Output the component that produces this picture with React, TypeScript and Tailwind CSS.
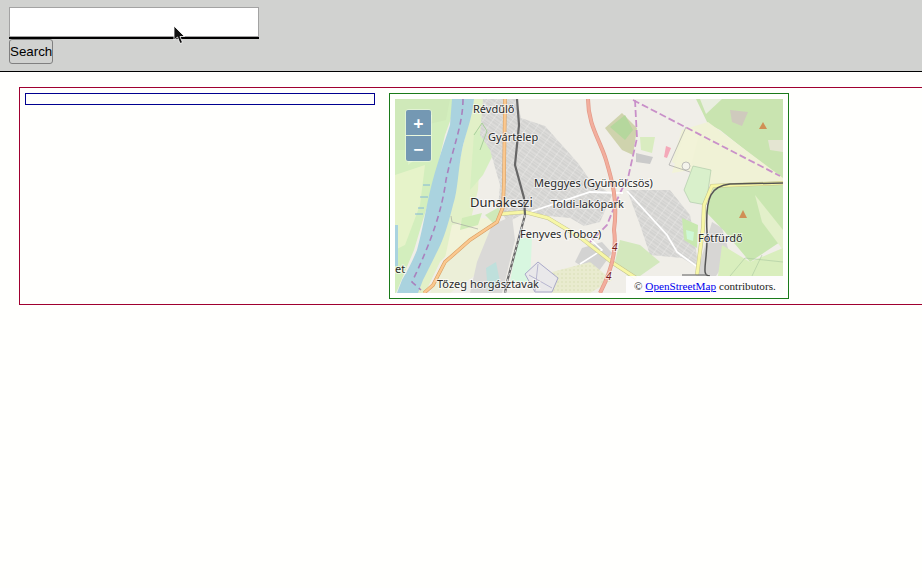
const Cursor = () => (
  <svg className="absolute left-[172px] top-[25px]" width="15" height="21" viewBox="0 0 15 21">
    <path d="M2 1 L2 15 L5.5 12 L8 18.5 L10.5 17.5 L8 11.5 L12.5 11.5 Z" fill="#111" stroke="#fff" strokeWidth="0.8" />
  </svg>
);

const MapDrawing = () => (
  <svg className="block" width="388" height="194" viewBox="395 99 388 194">
    <defs>
      <pattern id="streets" width="8" height="6" patternUnits="userSpaceOnUse" patternTransform="rotate(35)">
        <rect width="8" height="6" fill="#dcdbd9" />
        <path d="M0 0H8M0 3H8" stroke="#bcbbba" strokeWidth="0.6" />
        <path d="M0 0V6" stroke="#f1f0ee" strokeWidth="0.8" />
      </pattern>
      <pattern id="allotment" width="4" height="4" patternUnits="userSpaceOnUse">
        <rect width="4" height="4" fill="#e9ebcf" />
        <circle cx="2" cy="2" r="0.7" fill="#d3dcae" />
      </pattern>
    </defs>

    <rect x="395" y="99" width="388" height="194" fill="#f0eee8" />

    {/* west bank */}
    <path d="M395 99H458L445 135L432 190L414 250L396 293H395Z" fill="#d3eebd" />
    <path d="M395 99H450L446 120L425 125L413 150L395 150Z" fill="#cfe9b9" />
    <path d="M395 175L425 165L420 205L405 245L395 250Z" fill="#e6f3c9" />
    <path d="M412 115H432L428 150L408 165Z" fill="#def5c8" />
    <path d="M395 225H398V266H395Z" fill="#aad3df" />

    {/* east bank */}
    <path d="M474 99H489L487 130L480 155L478 190L467 235L440 262L425 293H416L428 255L450 210L462 150Z" fill="#e2f0c7" />
    <path d="M452 225L480 218L500 220L470 242L445 258Z" fill="#f1f3d8" />
    <path d="M462 218L482 213L478 225L460 230Z" fill="#d0ecb7" />
    <path d="M474 133L490 125L493 155L483 175L470 190Z" fill="#d6efc0" />
    <path d="M485 215L503 205L495 225Z" fill="#cfe9b9" />
    <path d="M470 240L500 225L490 265L450 293H430L445 262Z" fill="#ecefd8" />

    {/* river */}
    <path d="M452 99H474C472 120 465 135 462 150C458 170 458 190 453 205C448 225 444 238 438 250C432 262 427 272 423 280L418 293H397L402 280C408 270 413 260 417 250C421 235 424 220 427 205C433 175 442 150 450 125Z" fill="#aad3df" />
    <path d="M463 99C463 125 452 150 446 180C442 210 432 240 412 282L421 290" fill="none" stroke="#a981bd" strokeWidth="1.6" strokeDasharray="6 4" />

    {/* residential */}
    <path d="M483 99H517L521 118L545 126L578 163L590 180L612 195L600 222L584 226L570 218L548 216L525 213L508 222L498 208L500 185L490 150L480 135Z" fill="url(#streets)" />
    <path d="M477 262L492 225L512 216L515 240L502 293H470Z" fill="#dad9d7" />
    <path d="M486 268L496 262L500 282L488 293Z" fill="#bfe0dc" />
    <path d="M518 238L532 238L530 282H510Z" fill="#d8f7e0" />
    <path d="M627 190L670 190L690 215L695 240L698 268L682 258L650 255L640 225Z" fill="url(#streets)" />
    <path d="M582 248L602 242L612 253L596 275L575 262Z" fill="#d3d3d2" />
    <path d="M552 272L590 262L612 280L590 293H552Z" fill="url(#allotment)" />
    <path d="M525 274L538 262L558 278L552 292H535Z" fill="#e9e8ea" stroke="#a9a8c9" strokeWidth="1" />
    <path d="M529 275L552 288M538 264L535 291" fill="none" stroke="#a9a8c9" strokeWidth="0.8" />
    <path d="M620 240L640 245L660 262L640 276H628L615 262Z" fill="#d3e8bd" />
    <path d="M682 218L698 225L697 248L684 240Z" fill="#c8e8b0" />
    <path d="M686 230L694 232L693 241L687 239Z" fill="#cff7d6" />
    <path d="M712 222L722 228L730 255L716 276H696Z" fill="#d7d6d4" />

    {/* east forest and fields */}
    <path d="M696 99H783V180L720 130L708 124Z" fill="#c9e4b0" />
    <path d="M700 99H722L706 114Z" fill="#e9eee0" />
    <path d="M682 130L708 122L783 178V183L708 186L688 170L672 162Z" fill="#f0f2d6" />
    <path d="M693 166L711 170L706 205L690 202L684 190Z" fill="#d9f0cb" stroke="#9dbc9a" strokeWidth="0.5" />
    <path d="M714 186L783 184V240L750 262L725 232L706 212Z" fill="#c9e6b0" />
    <path d="M755 195L783 230V250L762 222Z" fill="#e3f0ca" />
    <path d="M722 245L750 262L783 248V276H718Z" fill="#d9eebd" />
    <path d="M730 276L745 258L783 262M752 276L762 255" fill="none" stroke="#a9c79f" strokeWidth="0.6" />
    <path d="M730 110L748 112L742 126L732 122Z" fill="#cfcabd" />
    <path d="M768 140H783V152L770 150Z" fill="#e4e5d2" />

    {/* west-central patches */}
    <path d="M605 128L622 113L637 128L633 155L622 150Z" fill="#cfd3ad" />
    <path d="M610 127L625 115L633 130L625 140Z" fill="#b5d79d" />
    <path d="M640 137H655L652 153L641 150Z" fill="#d9ecc0" />
    <path d="M636 153L653 157L650 164L636 162Z" fill="#cacaca" />
    <path d="M666 146L671 148L667 158L664 157Z" fill="#f4a9b9" />
    <path d="M672 173L686 127L700 130L690 170Z" fill="#f2f3d8" />
    <path d="M686 127L669 165L690 172" fill="none" stroke="#9b9b9b" strokeWidth="0.6" />
    <circle cx="686" cy="166" r="4" fill="#f5f4ec" stroke="#9b9b9b" strokeWidth="0.6" />
    <path d="M474 135L482 123L487 131L480 150" fill="none" stroke="#a9cf9b" strokeWidth="1" />
    <path d="M451 216L452 222L478 229" fill="none" stroke="#9e9e9e" strokeWidth="0.6" />

    {/* purple boundary */}
    <path d="M633 100L780 176" fill="none" stroke="#c990c9" strokeWidth="1.8" strokeDasharray="7 3" />
    <path d="M635 100L637 138L628 178L620 193L607 225L590 242" fill="none" stroke="#c990c9" strokeWidth="1.8" strokeDasharray="7 3" />

    {/* white roads */}
    <path d="M530 212L590 192L623 193" fill="none" stroke="#fff" strokeWidth="1.8" />
    <path d="M627 191L667 235L677 252L699 268" fill="none" stroke="#fff" strokeWidth="1.8" />
    <path d="M588 237L602 250L580 264" fill="none" stroke="#fff" strokeWidth="1.5" />

    {/* yellow road */}
    <path d="M499 214L525 212L548 218L581 238L613 263L636 278" fill="none" stroke="#c4c38f" strokeWidth="4" />
    <path d="M499 214L525 212L548 218L581 238L613 263L636 278" fill="none" stroke="#f7f7a6" strokeWidth="3" />
    <path d="M783 183L712 186L704 205L703 228L697 275" fill="none" stroke="#c4c38f" strokeWidth="4" />
    <path d="M783 183L712 186L704 205L703 228L697 275" fill="none" stroke="#f7f7a6" strokeWidth="3" />

    {/* orange road */}
    <path d="M505 99L504 180L503 207L497 222L470 240L445 262L433 285L424 293" fill="none" stroke="#d8a062" strokeWidth="3.6" />
    <path d="M505 99L504 180L503 207L497 222L470 240L445 262L433 285L424 293" fill="none" stroke="#fbc88f" strokeWidth="2.4" />

    {/* motorway */}
    <path d="M588 99C588 125 600 140 606 160C612 180 618 200 614 230C617 250 612 270 600 293" fill="none" stroke="#e29a88" strokeWidth="4" />
    <path d="M588 99C588 125 600 140 606 160C612 180 618 200 614 230C617 250 612 270 600 293" fill="none" stroke="#f3ae9d" strokeWidth="2.6" />

    {/* railway */}
    <path d="M517 99L519 125L515 165L524 198L525 215L507 282L505 293" fill="none" stroke="#666" strokeWidth="2.2" />
    <path d="M525 215L507 282L505 293" fill="none" stroke="#fff" strokeWidth="0.8" strokeDasharray="3 3" />
    <path d="M710 276C700 276 708 262 707 232C705 195 712 186 730 184L783 183" fill="none" stroke="#555" strokeWidth="1.5" />
    <path d="M682 275H707" fill="none" stroke="#777" strokeWidth="1.2" />

    {/* peaks */}
    <path d="M763 122L767 129H759Z" fill="#d08f55" />
    <path d="M743 210L747 218H739Z" fill="#d08f55" />

    {/* ferry stubs */}
    <path d="M423 185H430M420 197H428M418 208H424M415 214H423" stroke="#6ea8e0" strokeWidth="0.8" />

    <g fontFamily="'Noto Sans', sans-serif" fontSize="11" fill="#2a2a2a" stroke="#fff" strokeWidth="2" paintOrder="stroke" strokeOpacity="0.6">
      <text x="473" y="113">Révdűlő</text>
      <text x="488" y="141">Gyártelep</text>
      <text x="534" y="187">Meggyes (Gyümölcsös)</text>
      <text x="470" y="207" fontSize="13">Dunakeszi</text>
      <text x="551" y="208">Toldi-lakópark</text>
      <text x="520" y="238">Fenyves (Toboz)</text>
      <text x="698" y="242">Fótfürdő</text>
      <text x="437" y="288">Tőzeg horgásztavak</text>
      <text x="395" y="273">et</text>
      <text x="612" y="251" fontSize="10" fontStyle="italic" fill="#7a1f1f">4</text>
      <text x="606" y="280" fontSize="10" fontStyle="italic" fill="#7a1f1f">4</text>
    </g>
  </svg>
);

const App = () => {
  return (
    <div className="relative min-h-[588px] w-[922px] overflow-hidden bg-[#fffffd] font-['Liberation_Sans',sans-serif] text-[13.33px] text-black">
      {/* Search bar */}
      <header className="flex h-[72px] flex-col items-start border-b border-black bg-[#d1d2d0] pl-[9px] pt-[7px]">
        <input
          type="text"
          className="box-content h-[28px] w-[248px] border border-[#a3a3a3] bg-white outline-none"
        />
        <div className="h-[2px] w-[250px] bg-black" />
        <button className="h-[25px] w-[44px] rounded-[3px] border border-[#808080] bg-[#d1d2d0] text-center text-[13.33px] leading-none">
          Search
        </button>
      </header>

      {/* Results */}
      <main className="ml-[19px] mt-[15px] flex h-[218px] w-[1000px] items-start gap-[14px] border border-[#a00030] p-[5px]">
        <div className="h-[12px] w-[350px] border border-[#000090]" />
        <div className="w-[400px] border border-[#1a7a1a] p-[5px]">
          <div className="relative h-[194px] w-[388px] overflow-hidden">
            <MapDrawing />
            <div className="absolute left-[10px] top-[10px] flex flex-col gap-px rounded-[4px] bg-white/40 p-px font-['Noto_Sans',sans-serif] font-bold text-white">
              <span className="flex h-[25px] w-[25px] items-center justify-center rounded-t-[2px] bg-[#7498b3] text-[18px] leading-none">+</span>
              <span className="flex h-[25px] w-[25px] items-center justify-center rounded-b-[2px] bg-[#7498b3] text-[18px] leading-none">−</span>
            </div>
            <div className="absolute bottom-0 right-0 flex h-[17px] w-[157px] items-center bg-white/85 pl-[8px] pt-[3px] font-['Liberation_Serif',serif] text-[11.2px] text-[#222]">
              <span>
                © <a className="text-[#0000ee] underline">OpenStreetMap</a> contributors.
              </span>
            </div>
          </div>
        </div>
      </main>

      <Cursor />
    </div>
  );
};

export default App;
